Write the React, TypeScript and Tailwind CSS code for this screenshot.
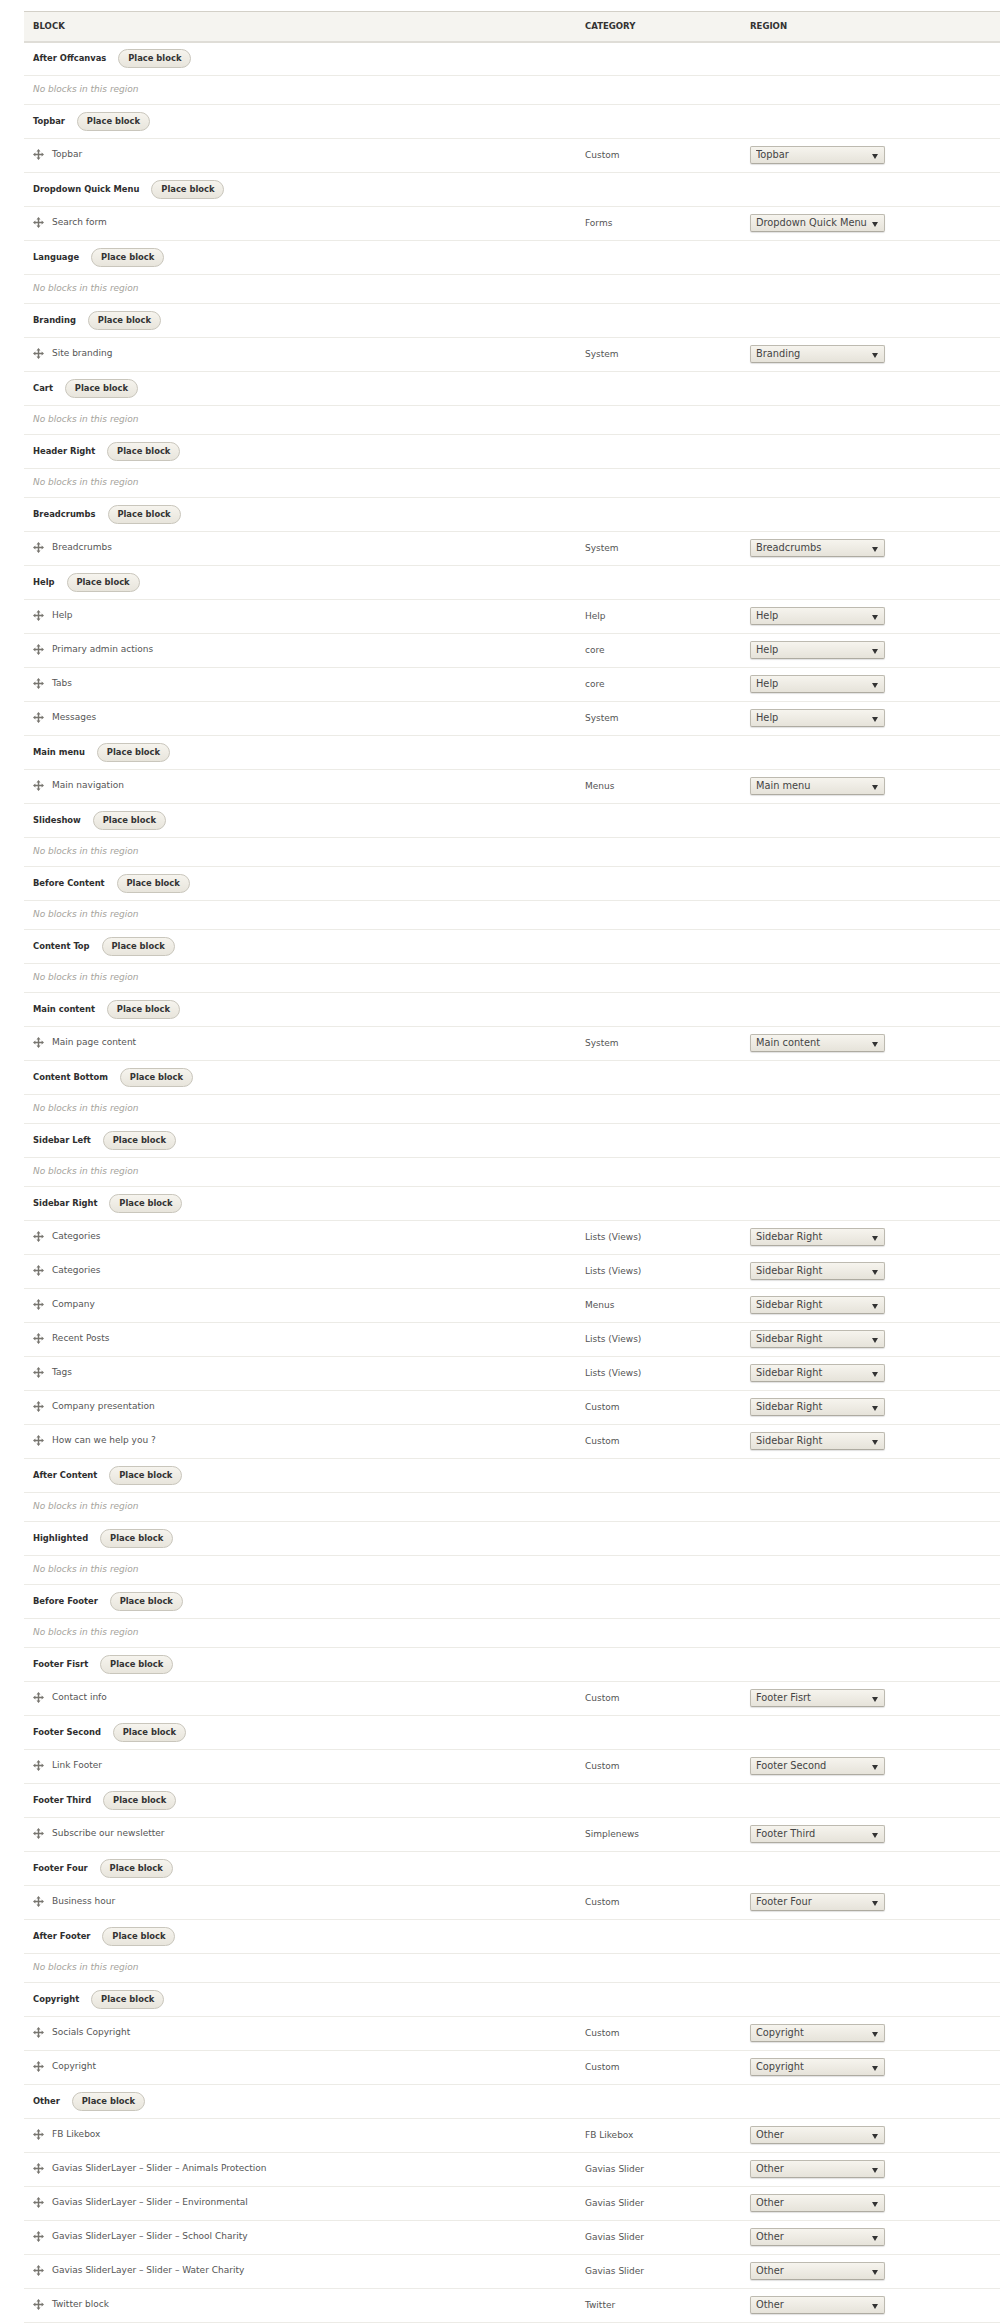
import React from 'react';

type Block = { name: string; category: string };
type Region = { title: string; blocks: Block[] };

const sliderPrefix = 'Gavias SliderLayer – Slider – ';

const regions: Region[] = [
  { title: 'After Offcanvas', blocks: [] },
  { title: 'Topbar', blocks: [{ name: 'Topbar', category: 'Custom' }] },
  { title: 'Dropdown Quick Menu', blocks: [{ name: 'Search form', category: 'Forms' }] },
  { title: 'Language', blocks: [] },
  { title: 'Branding', blocks: [{ name: 'Site branding', category: 'System' }] },
  { title: 'Cart', blocks: [] },
  { title: 'Header Right', blocks: [] },
  { title: 'Breadcrumbs', blocks: [{ name: 'Breadcrumbs', category: 'System' }] },
  {
    title: 'Help',
    blocks: [
      { name: 'Help', category: 'Help' },
      { name: 'Primary admin actions', category: 'core' },
      { name: 'Tabs', category: 'core' },
      { name: 'Messages', category: 'System' },
    ],
  },
  { title: 'Main menu', blocks: [{ name: 'Main navigation', category: 'Menus' }] },
  { title: 'Slideshow', blocks: [] },
  { title: 'Before Content', blocks: [] },
  { title: 'Content Top', blocks: [] },
  { title: 'Main content', blocks: [{ name: 'Main page content', category: 'System' }] },
  { title: 'Content Bottom', blocks: [] },
  { title: 'Sidebar Left', blocks: [] },
  {
    title: 'Sidebar Right',
    blocks: [
      { name: 'Categories', category: 'Lists (Views)' },
      { name: 'Categories', category: 'Lists (Views)' },
      { name: 'Company', category: 'Menus' },
      { name: 'Recent Posts', category: 'Lists (Views)' },
      { name: 'Tags', category: 'Lists (Views)' },
      { name: 'Company presentation', category: 'Custom' },
      { name: 'How can we help you ?', category: 'Custom' },
    ],
  },
  { title: 'After Content', blocks: [] },
  { title: 'Highlighted', blocks: [] },
  { title: 'Before Footer', blocks: [] },
  { title: 'Footer Fisrt', blocks: [{ name: 'Contact info', category: 'Custom' }] },
  { title: 'Footer Second', blocks: [{ name: 'Link Footer', category: 'Custom' }] },
  { title: 'Footer Third', blocks: [{ name: 'Subscribe our newsletter', category: 'Simplenews' }] },
  { title: 'Footer Four', blocks: [{ name: 'Business hour', category: 'Custom' }] },
  { title: 'After Footer', blocks: [] },
  {
    title: 'Copyright',
    blocks: [
      { name: 'Socials Copyright', category: 'Custom' },
      { name: 'Copyright', category: 'Custom' },
    ],
  },
  {
    title: 'Other',
    blocks: [
      { name: 'FB Likebox', category: 'FB Likebox' },
      { name: sliderPrefix + 'Animals Protection', category: 'Gavias Slider' },
      { name: sliderPrefix + 'Environmental', category: 'Gavias Slider' },
      { name: sliderPrefix + 'School Charity', category: 'Gavias Slider' },
      { name: sliderPrefix + 'Water Charity', category: 'Gavias Slider' },
      { name: 'Twitter block', category: 'Twitter' },
    ],
  },
];

function DragHandle() {
  return (
    <svg width="11" height="11" viewBox="0 0 12 12" className="shrink-0 text-[#77756f]" fill="currentColor">
      <path d="M6 0 L8.2 2.6 H6.8 V5.2 H9.4 V3.8 L12 6 L9.4 8.2 V6.8 H6.8 V9.4 H8.2 L6 12 L3.8 9.4 H5.2 V6.8 H2.6 V8.2 L0 6 L2.6 3.8 V5.2 H5.2 V2.6 H3.8 Z" />
    </svg>
  );
}

function RegionSelect({ value }: { value: string }) {
  return (
    <div className="relative w-[135px] h-[18px] -mt-px">
      <select
        defaultValue={value}
        className="appearance-none block w-full h-full pl-[5px] pr-[12px] text-[9.8px] leading-[16px] text-[#444] rounded-[2px] border border-[#bdbab0] border-b-[#aeaba1] bg-gradient-to-b from-[#f6f4ee] to-[#e6e3da] shadow-[0_1px_1px_rgba(0,0,0,0.12)]"
      >
        <option>{value}</option>
      </select>
      <span className="absolute right-[7px] top-[8px] w-0 h-0 border-x-[3.5px] border-x-transparent border-t-[5px] border-t-[#333]" />
    </div>
  );
}

export default function App() {
  return (
    <div className="min-h-screen bg-white pt-[11px] pl-6 font-['DejaVu_Sans',sans-serif] text-[9px] text-[#555]">
      <table className="w-full table-fixed border-collapse">
        <colgroup>
          <col className="w-[552px]" />
          <col className="w-[165px]" />
          <col />
        </colgroup>
        <thead>
          <tr className="h-[30px] bg-[#f5f4f0] border-t border-[#d3d0c8] border-b-2 border-b-[#dfddd7] text-left text-[9.5px] uppercase text-[#333] font-['DejaVu_Sans_Condensed','DejaVu_Sans',sans-serif]">
            <th className="pl-[9px] font-bold">Block</th>
            <th className="pl-[9px] font-bold">Category</th>
            <th className="pl-[9px] font-bold">Region</th>
          </tr>
        </thead>
        <tbody>
          {regions.map((region) => (
            <React.Fragment key={region.title}>
              <tr className="h-[34px] border-b border-[#ecebe6]">
                <td colSpan={3} className="pl-[9px]">
                  <div className="flex items-center -mt-px font-['DejaVu_Sans_Condensed','DejaVu_Sans',sans-serif] text-[9.3px] font-bold">
                    <span className="text-[#2e2e2e]">{region.title}</span>
                    <button className="ml-[12px] h-[19px] w-[73px] rounded-full border border-[#c9c6bc] bg-gradient-to-b from-[#f6f4ee] to-[#e8e5dc] text-[#333] whitespace-nowrap">
                      Place block
                    </button>
                  </div>
                </td>
              </tr>
              {region.blocks.length === 0 && (
                <tr className="h-[29px] border-b border-[#ecebe6]">
                  <td colSpan={3} className="pl-[9px] italic text-[#a5a39c]">
                    No blocks in this region
                  </td>
                </tr>
              )}
              {region.blocks.map((block, i) => (
                <tr key={i} className="h-[34px] border-b border-[#ecebe6]">
                  <td className="pl-[9px]">
                    <div className="flex items-center gap-[8px] -mt-[2px]">
                      <DragHandle />
                      <span>{block.name}</span>
                    </div>
                  </td>
                  <td className="pl-[9px]">{block.category}</td>
                  <td className="pl-[9px]">
                    <RegionSelect value={region.title} />
                  </td>
                </tr>
              ))}
            </React.Fragment>
          ))}
        </tbody>
      </table>
    </div>
  );
}
